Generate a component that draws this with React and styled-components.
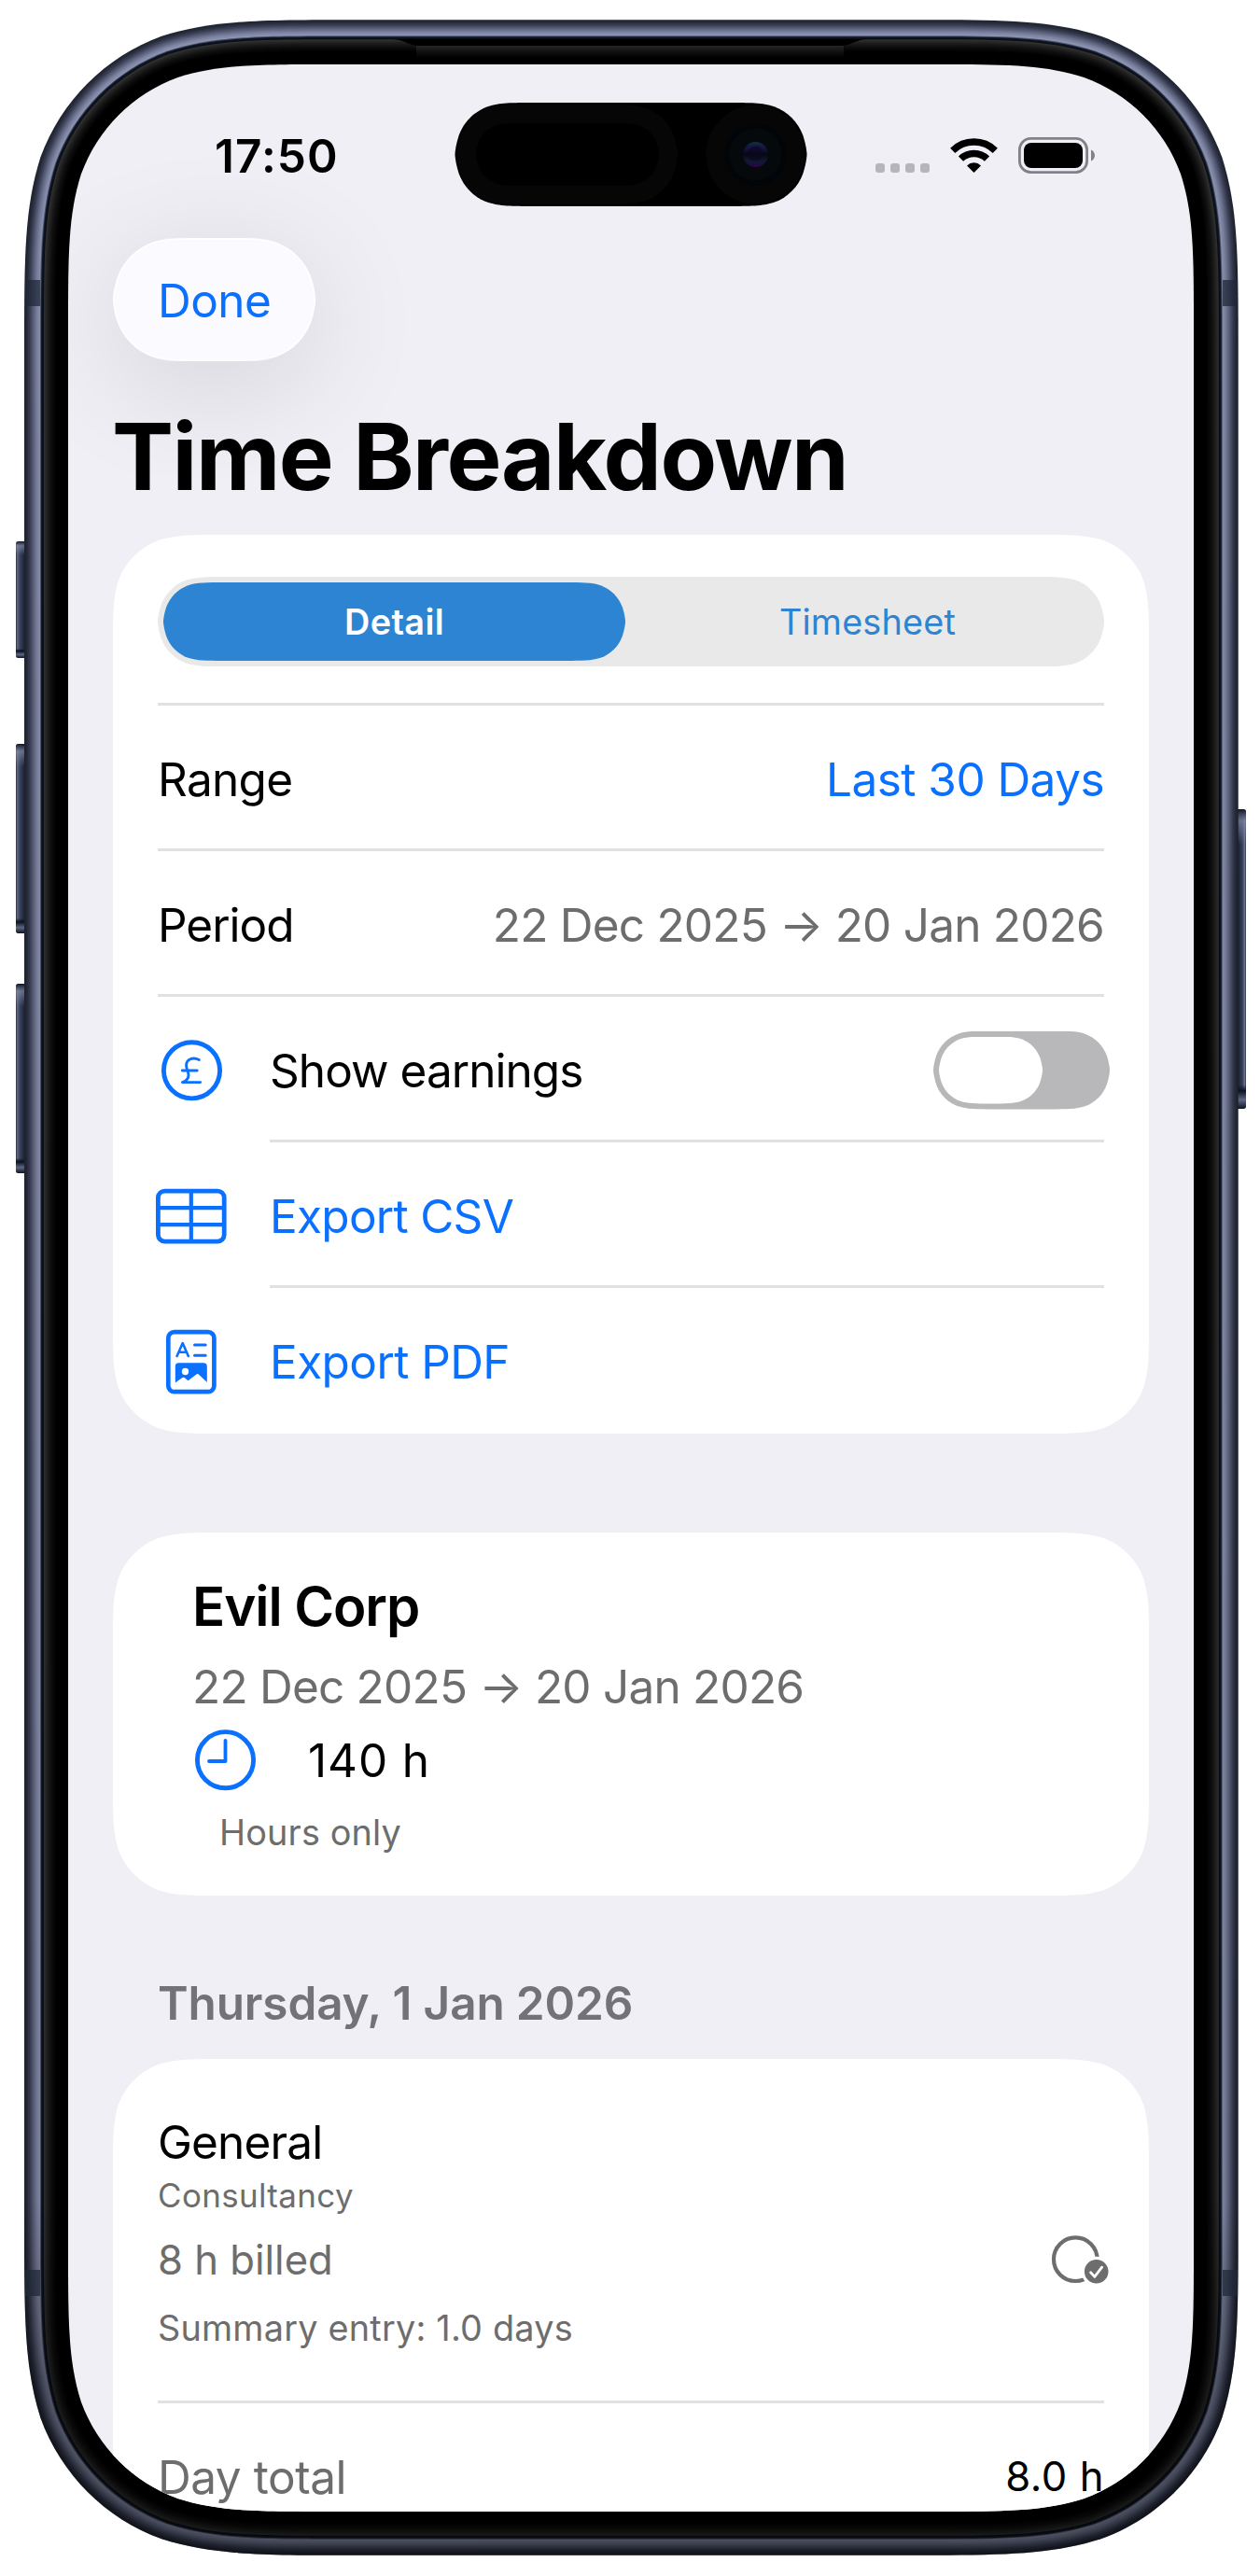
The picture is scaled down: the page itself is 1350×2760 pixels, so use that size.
import { useState } from "react";
import styled, { createGlobalStyle } from "styled-components";

const BLUE = "#0a70ff";
const GREY = "#6d6d6d";

// rounded rect with continuous (iOS style) corners
const squircle = (w, h, r, x = 0, y = 0) => {
  const ex = Math.min(1.52866 * r, w / 2);
  const ey = Math.min(1.52866 * r, h / 2);
  const cx = Math.min(1.08849 * r, ex);
  const cy = Math.min(1.08849 * r, ey);
  const a = 0.86841 * r, b = 0.63149 * r, c = 0.37282 * r, d = 0.16906 * r, e = 0.07491 * r;
  const X = (v) => (x + v).toFixed(2);
  const Y = (v) => (y + v).toFixed(2);
  return [
    `M${X(ex)} ${Y(0)}L${X(w - ex)} ${Y(0)}`,
    `C${X(w - cx)} ${Y(0)} ${X(w - a)} ${Y(0)} ${X(w - b)} ${Y(e)}`,
    `C${X(w - c)} ${Y(d)} ${X(w - d)} ${Y(c)} ${X(w - e)} ${Y(b)}`,
    `C${X(w)} ${Y(a)} ${X(w)} ${Y(cy)} ${X(w)} ${Y(ey)}`,
    `L${X(w)} ${Y(h - ey)}`,
    `C${X(w)} ${Y(h - cy)} ${X(w)} ${Y(h - a)} ${X(w - e)} ${Y(h - b)}`,
    `C${X(w - d)} ${Y(h - c)} ${X(w - c)} ${Y(h - d)} ${X(w - b)} ${Y(h - e)}`,
    `C${X(w - a)} ${Y(h)} ${X(w - cx)} ${Y(h)} ${X(w - ex)} ${Y(h)}`,
    `L${X(ex)} ${Y(h)}`,
    `C${X(cx)} ${Y(h)} ${X(a)} ${Y(h)} ${X(b)} ${Y(h - e)}`,
    `C${X(c)} ${Y(h - d)} ${X(d)} ${Y(h - c)} ${X(e)} ${Y(h - b)}`,
    `C${X(0)} ${Y(h - a)} ${X(0)} ${Y(h - cy)} ${X(0)} ${Y(h - ey)}`,
    `L${X(0)} ${Y(ey)}`,
    `C${X(0)} ${Y(cy)} ${X(0)} ${Y(a)} ${X(e)} ${Y(b)}`,
    `C${X(d)} ${Y(c)} ${X(c)} ${Y(d)} ${X(b)} ${Y(e)}`,
    `C${X(a)} ${Y(0)} ${X(cx)} ${Y(0)} ${X(ex)} ${Y(0)}Z`,
  ].join("");
};

const clip = (w, h, r) => `clip-path:path("${squircle(w, h, r)}");`;

const GlobalStyle = createGlobalStyle`
*{
  box-sizing:border-box;
}
body{
  margin:0;
  background:#fff;
  font-family:Inter, "Liberation Sans", sans-serif;
}
button{
  border:none;
  padding:0;
  font-family:inherit;
  cursor:pointer;
}
`

const Page = styled.div`
width:1350px;
height:2760px;
position:relative;
overflow:hidden;
padding:69px 0 0 73px;
`

const FrameArt = styled.svg`
position:absolute;
top:0;
left:0;
`

const Screen = styled.main`
position:relative;
width:1206px;
height:2622px;
background:#f0eff5;
overflow:hidden;
${clip(1206, 2622, 186)}
`

const Text = styled.span`
display:block;
white-space:pre;
color:${(props) => props.$color || "#000"};
font-size:${(props) => props.$size || 49.5}px;
font-weight:${(props) => props.$weight || 400};
letter-spacing:${(props) => props.$ls || 0}px;
`

const StatusBar = styled.header`
height:186px;
padding:42px 0 33px 157px;
display:flex;
align-items:center;
position:relative;
`

const StatusIcons = styled.div`
display:flex;
align-items:center;
margin-left:572px;
`

const Island = styled.svg`
position:absolute;
left:414px;
top:41px;
`

const DoneShadow = styled.div`
width:217px;
height:132px;
margin-left:48px;
border-radius:66px;
box-shadow:0 24px 130px rgba(0,0,0,0.12);
`

const DoneButton = styled.button`
width:217px;
height:132px;
background:#fff;
display:flex;
${clip(217, 132, 66)}
`

const DoneFace = styled.span`
margin:1.5px;
width:214px;
height:129px;
padding:1px 0 0 46.5px;
display:flex;
align-items:center;
background:#fbfaff;
${clip(214, 129, 64.5)}
`

const Title = styled.h1`
margin:41px 0 23px 47px;
font-size:99px;
line-height:122px;
font-weight:700;
letter-spacing:-1.51px;
`

const Card = styled.section`
width:1110px;
height:${(props) => props.$h}px;
margin-left:48px;
background:#fff;
${(props) => clip(1110, props.$h, 78)}
`

const SettingsCard = styled(Card)`
padding:0 48px;
`

const Row = styled.div`
height:156px;
padding-top:${(props) => (props.$last ? 1 : 4)}px;
margin-left:${(props) => (props.$inset ? 120 : 0)}px;
border-bottom:${(props) => (props.$last ? "none" : "3px solid #e1e1e1")};
display:flex;
align-items:center;
justify-content:${(props) => (props.$inset ? "flex-start" : "space-between")};
`

// the divider starts at the label, so the icon hangs out to the left
const IconSlot = styled.span`
width:80px;
height:80px;
margin-left:-124px;
margin-right:44px;
flex:none;
`

const SegmentRow = styled.div`
height:183px;
padding-top:45px;
border-bottom:3px solid #e1e1e1;
`

const Segments = styled.div`
width:1014px;
height:96px;
padding:6px;
display:flex;
justify-content:space-between;
background:#e9e9e9;
${clip(1014, 96, 48)}
`

const Segment = styled.button`
width:495px;
height:84px;
display:flex;
align-items:center;
justify-content:center;
background:${(props) => (props.$active ? "#2c84d2" : "transparent")};
${clip(495, 84, 42)}
`

const Toggle = styled.button`
width:189px;
height:84px;
margin-left:auto;
margin-right:-6px;
padding:6px;
background:#b8b8ba;
${clip(189, 84, 42)}
`

const Knob = styled.span`
display:block;
width:111px;
height:72px;
background:#fff;
${clip(111, 72, 36)}
`

const ClientCard = styled(Card)`
margin-top:106px;
padding:44px 48px 0 85px;
display:flex;
flex-direction:column;
`

const Line = styled.div`
height:${(props) => props.$h}px;
line-height:${(props) => props.$h}px;
margin-top:${(props) => props.$mt || 0}px;
margin-left:${(props) => props.$ml || 0}px;
display:flex;
align-items:center;
flex:none;
`

const ClockIcon = styled.svg`
margin:0 55px 0 2px;
flex:none;
`

const SectionHeader = styled.h2`
margin:85px 0 30px 96px;
font-size:49.5px;
line-height:60px;
font-weight:600;
letter-spacing:-0.15px;
color:#737278;
`

const DayCard = styled(Card)`
padding:59px 48px 0;
`

const BilledLine = styled(Line)`
justify-content:space-between;
margin-right:-7px;
`

const Divider = styled.div`
height:3px;
margin-top:55px;
background:#e1e1e1;
`

// [inset, r, g, b] from the outer edge of the band to the glass
const bandStops = [
  [0, 32, 37, 50],
  [2, 38, 43, 58],
  [5, 56, 61, 82],
  [9, 92, 98, 124],
  [13, 126, 133, 162],
  [16, 142, 149, 180],
  [17, 78, 86, 112],
  [18, 18, 25, 40],
  [20, 10, 14, 22],
  [21, 50, 50, 48],
  [23, 38, 38, 38],
  [28, 16, 16, 16],
  [34, 0, 0, 0],
];

const bandColor = (i) => {
  const n = bandStops.findIndex((s) => s[0] >= i);
  if (n <= 0) return `rgb(${bandStops[0].slice(1).join(",")})`;
  const p = bandStops[n - 1], q = bandStops[n];
  const t = (i - p[0]) / (q[0] - p[0]);
  return `rgb(${[1, 2, 3].map((k) => Math.round(p[k] + (q[k] - p[k]) * t)).join(",")})`;
};

const outline = (i) => squircle(1300.7 - 2 * i, 2716.6 - 2 * i, 233 - i, 26 + i, 21.2 + i);

const sideButtons = [
  { x: 17, y: 580, w: 12, h: 125, fill: "url(#keyLeft)" },
  { x: 17, y: 797, w: 12, h: 203, fill: "url(#keyLeft)" },
  { x: 17, y: 1054, w: 12, h: 203, fill: "url(#keyLeft)" },
  { x: 1323, y: 867, w: 12, h: 321, fill: "url(#keyRight)" },
];

const Frame = () => (
  <FrameArt width="1350" height="2760" viewBox="0 0 1350 2760">
    <defs>
      <linearGradient id="keyLeft">
        <stop offset="0" stopColor="#20283a" />
        <stop offset="0.12" stopColor="#5d6785" />
        <stop offset="0.35" stopColor="#3a435c" />
        <stop offset="0.8" stopColor="#1a2133" />
      </linearGradient>
      <linearGradient id="keyRight">
        <stop offset="0.3" stopColor="#1a2133" />
        <stop offset="0.7" stopColor="#3a435c" />
        <stop offset="0.9" stopColor="#6d7695" />
        <stop offset="1" stopColor="#20283a" />
      </linearGradient>
      <linearGradient id="keyEnds" x2="0" y2="1">
        <stop offset="0" stopColor="#0c1220" />
        <stop offset="0.04" stopColor="#8089a8" stopOpacity="0.7" />
        <stop offset="0.12" stopColor="#8089a8" stopOpacity="0" />
        <stop offset="0.92" stopColor="#0c1220" stopOpacity="0" />
        <stop offset="0.94" stopColor="#0c1220" />
        <stop offset="0.97" stopColor="#5d6785" />
        <stop offset="1" stopColor="#0c1220" />
      </linearGradient>
      <linearGradient id="shade" x2="0" y2="1">
        <stop offset="0" stopOpacity="0" />
        <stop offset="0.12" stopOpacity="0.06" />
        <stop offset="0.86" stopOpacity="0.12" />
        <stop offset="0.93" stopOpacity="0.42" />
        <stop offset="1" stopOpacity="0.48" />
      </linearGradient>
      <linearGradient id="slot" x2="0" y2="1">
        <stop offset="0" stopColor="#262626" />
        <stop offset="0.5" stopColor="#101010" />
        <stop offset="1" stopColor="#000" />
      </linearGradient>
    </defs>
    {sideButtons.map((b) => (
      <g key={b.y}>
        <rect x={b.x} y={b.y} width={b.w} height={b.h} rx="3" fill={b.fill} />
        <rect x={b.x} y={b.y} width={b.w} height={b.h} rx="3" fill="url(#keyEnds)" />
      </g>
    ))}
    {Array.from({ length: 35 }, (_, i) => (
      <path key={i} d={outline(i)} fill={bandColor(i)} />
    ))}
    <path d={outline(0)} fill="url(#shade)" />
    <path d="M420 42H930C917 42 913 49 900 49H450C437 49 433 42 420 42Z" fill="#000" />
    <rect x="446" y="49" width="458" height="13" fill="url(#slot)" />
    {[300, 2432].map((y) => (
      <g key={y} fill="#20283a" fillOpacity="0.75">
        <rect x="27" y={y} width="16" height="28" />
        <rect x="1310" y={y} width="16" height="28" />
      </g>
    ))}
  </FrameArt>
);

const CameraIsland = () => (
  <Island width="378" height="111" viewBox="0 0 378 111">
    <defs>
      <linearGradient id="lens" x2="0" y2="1">
        <stop offset="0" stopColor="#17404f" />
        <stop offset="0.25" stopColor="#1d1560" />
        <stop offset="0.5" stopColor="#07070f" />
        <stop offset="0.75" stopColor="#122040" />
        <stop offset="1" stopColor="#3c0066" />
      </linearGradient>
    </defs>
    <path d={squircle(377, 111, 55.5, 0.5)} fill="#000" />
    <path d={squircle(237, 107, 53, 2, 2)} fill="#060606" />
    <path d={squircle(196, 67, 33.5, 23, 22)} fill="#000" />
    <circle cx="322.5" cy="55.5" r="53" fill="#060606" />
    <circle cx="322.5" cy="55.5" r="33" fill="#020508" />
    <circle cx="322.5" cy="55.5" r="28" fill="#06090b" />
    <circle cx="322.5" cy="55.5" r="13.5" fill="url(#lens)" opacity="0.7" />
    <circle cx="322.5" cy="54.5" r="8" fill="#0a0720" opacity="0.6" />
  </Island>
);

const StatusGlyphs = () => (
  <svg width="240" height="44" viewBox="935 145 240 44">
    {[938, 954, 970, 986].map((x) => (
      <rect key={x} x={x} y="175" width="10" height="10" rx="3" fill="#b6b5ba" />
    ))}
    <g fill="none" stroke="#000" strokeWidth="7.4">
      <path d="M1020.7 161.3A32.5 32.5 0 0 1 1066.3 161.3" />
      <path d="M1029.5 170.2A20 20 0 0 1 1057.5 170.2" />
    </g>
    <path d="M1043.5 185L1036 177.4A10.8 10.8 0 0 1 1051 177.4Z" />
    <rect x="1092.4" y="148.4" width="72.2" height="36.2" rx="12" fill="none" stroke="#828187" strokeWidth="2.8" />
    <rect x="1097" y="153" width="63" height="27" rx="8" />
    <path d="M1169 160.5C1174.3 162.5 1174.3 170.5 1169 172.5Z" fill="#828187" />
  </svg>
);

const PoundIcon = () => (
  <svg width="80" height="80" viewBox="165 1106.5 80 80" fill="none" stroke={BLUE} strokeLinecap="round" strokeLinejoin="round">
    <circle cx="205.5" cy="1146.3" r="30.1" strokeWidth="4.9" />
    <path d="M213.3 1135C206.5 1131.6 199.6 1134.4 199.6 1141C199.6 1145.5 202 1147.5 202 1151.5C202 1155.3 199.3 1157.8 195.4 1159.1H214.6M195.3 1146.5H211.2" strokeWidth="2.9" />
  </svg>
);

const TableIcon = () => (
  <svg width="80" height="80" viewBox="165 1262.5 80 80" fill="none" stroke={BLUE} strokeWidth="4.8">
    <rect x="169.4" y="1275.6" width="70.8" height="54" rx="7" />
    <path d="M204.8 1275V1330M169 1293.6H240M169 1311.7H240" strokeWidth="4.2" />
  </svg>
);

const DocIcon = () => (
  <svg width="80" height="80" viewBox="165 1418.5 80 80" fill="none" stroke={BLUE} strokeLinecap="round" strokeLinejoin="round">
    <rect x="180.3" y="1426.6" width="49.1" height="64.1" rx="6.5" strokeWidth="4.7" />
    <path d="M189.6 1452.6L195.7 1438.6L201.8 1452.6M191.8 1448.2H199.6" strokeWidth="2.6" />
    <path d="M208.5 1440.4H220.2M208.5 1451.7H220.2" strokeWidth="3" />
    <path
      d="M187.8 1463.5Q187.8 1459.8 191.5 1459.8H218Q221.8 1459.8 221.8 1463.5V1480.6L212.5 1471.8Q211.5 1471 210.5 1472L201.5 1478.8L197.6 1475.6Q196.5 1474.8 195.4 1475.6L187.8 1481ZM198.5 1465.3A3.7 3.7 0 1 0 198.5 1472.7A3.7 3.7 0 1 0 198.5 1465.3Z"
      fill={BLUE}
      fillRule="evenodd"
      stroke="none"
    />
  </svg>
);

const BilledBadge = () => (
  <svg width="66" height="54" viewBox="1124 2395 66 54" fill="none">
    <circle cx="1152.3" cy="2420.7" r="23.3" stroke={GREY} strokeWidth="4.2" />
    <circle cx="1174.7" cy="2433.7" r="16" fill="#fff" />
    <circle cx="1174.7" cy="2433.7" r="12.8" fill={GREY} />
    <path d="M1168.6 2434.8L1172.8 2439.4L1180.6 2429.2" stroke="#fff" strokeWidth="2.8" strokeLinecap="round" strokeLinejoin="round" />
  </svg>
);

const PERIOD = "22 Dec 2025 → 20 Jan 2026";

const App = () => {
  const [tab, setTab] = useState("Detail");

  return (
    <Page>
      <GlobalStyle />
      <Frame />
      <Screen>
        <StatusBar>
          <Text $weight={600} $ls={1.08}>17:50</Text>
          <StatusIcons>
            <StatusGlyphs />
          </StatusIcons>
          <CameraIsland />
        </StatusBar>
        <DoneShadow>
          <DoneButton>
            <DoneFace>
              <Text $color={BLUE} $ls={-0.55}>Done</Text>
            </DoneFace>
          </DoneButton>
        </DoneShadow>
        <Title>Time Breakdown</Title>

        <SettingsCard $h={963}>
          <SegmentRow>
            <Segments>
              <Segment $active={tab === "Detail"} onClick={() => setTab("Detail")}>
                <Text $size={37.8} $weight={600} $ls={0.35} $color="#fff">Detail</Text>
              </Segment>
              <Segment $active={tab === "Timesheet"} onClick={() => setTab("Timesheet")}>
                <Text $size={37.8} $ls={0.2} $color="#2c84d2">Timesheet</Text>
              </Segment>
            </Segments>
          </SegmentRow>
          <Row>
            <Text $ls={-0.7}>Range</Text>
            <Text $color={BLUE} $ls={-0.55}>Last 30 Days</Text>
          </Row>
          <Row>
            <Text $ls={-1}>Period</Text>
            <Text $color={GREY} $ls={-0.78}>{PERIOD}</Text>
          </Row>
          <Row $inset>
            <IconSlot><PoundIcon /></IconSlot>
            <Text $ls={-0.95}>Show earnings</Text>
            <Toggle><Knob /></Toggle>
          </Row>
          <Row $inset>
            <IconSlot><TableIcon /></IconSlot>
            <Text $color={BLUE} $ls={-0.73}>Export CSV</Text>
          </Row>
          <Row $inset $last>
            <IconSlot><DocIcon /></IconSlot>
            <Text $color={BLUE} $ls={-0.59}>Export PDF</Text>
          </Row>
        </SettingsCard>

        <ClientCard $h={389}>
          <Line $h={70}>
            <Text $size={58.2} $weight={600} $ls={-1.07}>Evil Corp</Text>
          </Line>
          <Line $h={62} $mt={20}>
            <Text $color={GREY} $ls={-0.78}>{PERIOD}</Text>
          </Line>
          <Line $h={66} $mt={15}>
            <ClockIcon width="67" height="66" viewBox="208 1853 67 66" fill="none" stroke={BLUE}>
              <circle cx="241.5" cy="1885.7" r="30.1" strokeWidth="4.9" />
              <path d="M241.5 1865V1887H224" strokeWidth="3.8" strokeLinecap="round" strokeLinejoin="round" />
            </ClockIcon>
            <Text $ls={0.9}>140 h</Text>
          </Line>
          <Line $h={46} $mt={21} $ml={29}>
            <Text $size={37.8} $color={GREY} $ls={0.14}>Hours only</Text>
          </Line>
        </ClientCard>

        <SectionHeader>Thursday, 1 Jan 2026</SectionHeader>

        <DayCard $h={700}>
          <Line $h={60}>
            <Text $ls={-0.85}>General</Text>
          </Line>
          <Line $h={42} $mt={6}>
            <Text $size={34.9} $color={GREY} $ls={0.39}>Consultancy</Text>
          </Line>
          <BilledLine $h={54} $mt={22}>
            <Text $size={43.6} $color={GREY}>8 h billed</Text>
            <BilledBadge />
          </BilledLine>
          <Line $h={46} $mt={22}>
            <Text $size={37.8} $color={GREY} $ls={0.22}>Summary entry: 1.0 days</Text>
          </Line>
          <Divider />
          <Row $last>
            <Text $color={GREY} $ls={-0.46}>Day total</Text>
            <Text $size={43.6} $ls={0.55}>8.0 h</Text>
          </Row>
        </DayCard>
      </Screen>
    </Page>
  )
}

export default App
